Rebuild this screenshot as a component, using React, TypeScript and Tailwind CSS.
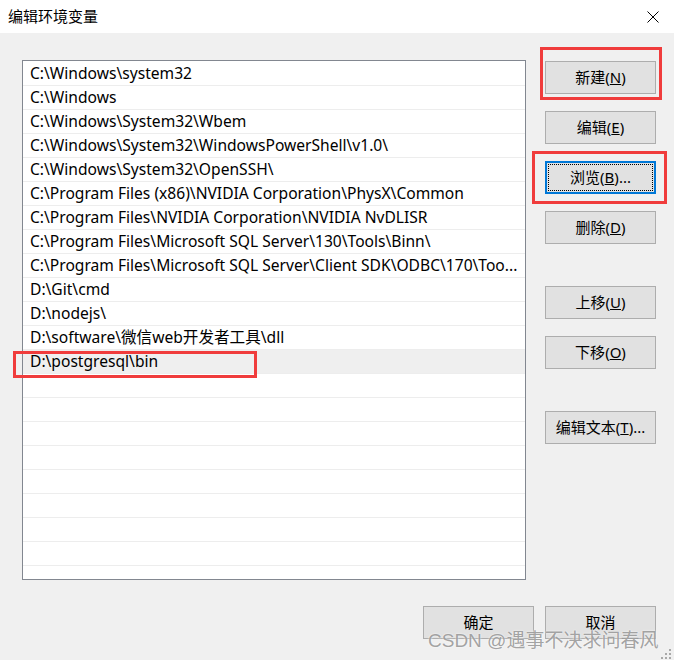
import React from "react";

const paths = [
  "C:\\Windows\\system32",
  "C:\\Windows",
  "C:\\Windows\\System32\\Wbem",
  "C:\\Windows\\System32\\WindowsPowerShell\\v1.0\\",
  "C:\\Windows\\System32\\OpenSSH\\",
  "C:\\Program Files (x86)\\NVIDIA Corporation\\PhysX\\Common",
  "C:\\Program Files\\NVIDIA Corporation\\NVIDIA NvDLISR",
  "C:\\Program Files\\Microsoft SQL Server\\130\\Tools\\Binn\\",
  "C:\\Program Files\\Microsoft SQL Server\\Client SDK\\ODBC\\170\\Too...",
  "D:\\Git\\cmd",
  "D:\\nodejs\\",
  "D:\\software\\微信web开发者工具\\dll",
  "D:\\postgresql\\bin",
  "",
  "",
  "",
  "",
  "",
  "",
  "",
  "",
  "",
];

function Btn({
  label,
  hot,
  tail,
  focused,
}: {
  label: string;
  hot: string;
  tail?: string;
  focused?: boolean;
}) {
  return (
    <button
      className={
        focused
          ? "relative w-[111px] h-[33px] bg-[#e1e1e1] border-2 border-[#0078d7] text-[15px] text-black flex items-center justify-center"
          : "w-[111px] h-[33px] bg-[#e1e1e1] border border-[#adadad] text-[15px] text-black flex items-center justify-center"
      }
    >
      {focused && (
        <span className="absolute inset-[1px] border border-dotted border-black"></span>
      )}
      <span>
        {label}(<span className="underline">{hot}</span>){tail}
      </span>
    </button>
  );
}

export default function App() {
  return (
    <div className="relative w-[674px] h-[660px] flex flex-col bg-[#f0f0f0] font-['Noto_Sans','Noto_Sans_CJK_SC',sans-serif] overflow-hidden">
      {/* Title bar */}
      <div className="h-[33px] bg-white flex items-center justify-between pl-[8px] pr-[15px]">
        <span className="text-[15px] text-black">编辑环境变量</span>
        <svg width="12" height="12" viewBox="0 0 12 12">
          <path d="M0.5 0.5 L11.5 11.5 M11.5 0.5 L0.5 11.5" stroke="#000" strokeWidth="1" />
        </svg>
      </div>

      {/* Body */}
      <div className="flex-1 flex flex-col pt-[27px] pl-[22px] pr-[18px]">
        <div className="flex gap-[19px]">
          {/* Path list */}
          <div className="w-[504px] h-[520px] bg-white border border-[#828790] pt-px overflow-hidden">
            {paths.map((p, i) => (
              <div
                key={i}
                className={
                  p === "D:\\postgresql\\bin"
                    ? "h-[24px] border-b border-[#ededed] bg-[#efefef] pl-[7px] flex items-center text-[15.6px] text-black whitespace-nowrap"
                    : "h-[24px] border-b border-[#ededed] pl-[7px] flex items-center text-[15.6px] text-black whitespace-nowrap"
                }
              >
                {p}
              </div>
            ))}
          </div>

          {/* Right buttons */}
          <div className="flex flex-col pt-px">
            <div className="flex flex-col gap-[17px]">
              <Btn label="新建" hot="N" />
              <Btn label="编辑" hot="E" />
              <Btn label="浏览" hot="B" tail="..." focused />
              <Btn label="删除" hot="D" />
            </div>
            <div className="flex flex-col gap-[17px] mt-[42px]">
              <Btn label="上移" hot="U" />
              <Btn label="下移" hot="O" />
            </div>
            <div className="mt-[42px]">
              <Btn label="编辑文本" hot="T" tail="..." />
            </div>
          </div>
        </div>

        {/* Bottom buttons */}
        <div className="flex justify-end gap-[11px] mt-[26px]">
          <button className="w-[111px] h-[33px] bg-[#e1e1e1] border border-[#adadad] text-[15px] text-black">确定</button>
          <button className="w-[111px] h-[33px] bg-[#e1e1e1] border border-[#adadad] text-[15px] text-black">取消</button>
        </div>
      </div>

      {/* Annotation boxes */}
      <div className="absolute left-[540px] top-[47px] w-[122px] h-[53px] border-[3px] border-[#f03c3c]"></div>
      <div className="absolute left-[532px] top-[151px] w-[135px] h-[53px] border-[3px] border-[#f03c3c]"></div>
      <div className="absolute left-[13px] top-[351px] w-[244px] h-[27px] border-[3px] border-[#f03c3c]"></div>

      {/* Watermark */}
      <div className="absolute left-[428px] top-[627px] text-[19px] text-[#8c8c8c]/80 [text-shadow:0_0_2px_#ffffff] whitespace-nowrap font-['Liberation_Sans','Noto_Sans_CJK_SC',sans-serif]">
        CSDN @遇事不决求问春风
      </div>

      {/* Resize grip */}
      <svg className="absolute right-[2px] bottom-0" width="12" height="12" viewBox="0 0 12 12">
        <rect x="9" y="1" width="2" height="2" fill="#a8a8a8" />
        <rect x="5" y="5" width="2" height="2" fill="#a8a8a8" />
        <rect x="9" y="5" width="2" height="2" fill="#a8a8a8" />
        <rect x="1" y="9" width="2" height="2" fill="#a8a8a8" />
        <rect x="5" y="9" width="2" height="2" fill="#a8a8a8" />
        <rect x="9" y="9" width="2" height="2" fill="#a8a8a8" />
      </svg>
    </div>
  );
}
